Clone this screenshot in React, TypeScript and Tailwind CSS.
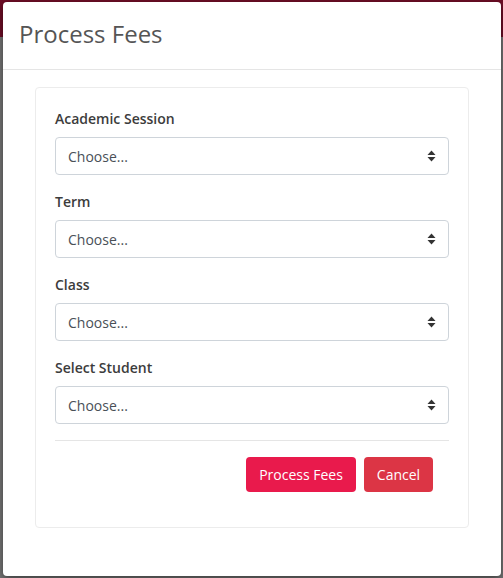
const fields = ['Academic Session', 'Term', 'Class', 'Select Student'];

function SortIcon() {
  return (
    <svg width="9" height="12" viewBox="0 0 9 12" className="text-[#333]">
      <path d="M4.5 0.5 L8.5 5 L0.5 5 Z" fill="currentColor" />
      <path d="M4.5 11.5 L8.5 7 L0.5 7 Z" fill="currentColor" />
    </svg>
  );
}

function FakeSelect() {
  return (
    <div className="flex h-[38px] items-center justify-between rounded border border-[#ced4da] bg-white pl-3 pr-[12px] text-[14px] text-[#495057]">
      <span>Choose...</span>
      <SortIcon />
    </div>
  );
}

export default function App() {
  return (
    <div
      className="relative h-[578px] w-[503px] overflow-hidden bg-[#767676]"
      style={{ fontFamily: '"Open Sans", "Liberation Sans", sans-serif' }}
    >
      {/* dimmed page behind the modal */}
      <div className="absolute left-0 right-0 top-0 h-[37px] bg-[#6e0d26]" />

      <div className="relative ml-[3px] mt-[2px] h-[574px] w-[498px] rounded bg-white shadow-[0_3px_9px_rgba(0,0,0,0.5)]">
        <div className="flex h-[68px] items-center border-b border-[#e5e5e5] pl-[16px]">
          <div className="-mt-[3px] text-[24px] leading-none text-[#555]">Process Fees</div>
        </div>

        <div className="px-8 pt-[17px]">
          <div className="rounded border border-[#ececec] px-[19px] pb-[35px] pt-5">
            {fields.map((label) => (
              <div key={label} className="mb-4">
                <div className="mb-2 text-[14px] font-semibold leading-[21px] text-[#3c3c3c]">{label}</div>
                <FakeSelect />
              </div>
            ))}

            <div className="h-px bg-[#e5e5e5]" />

            <div className="flex justify-end gap-2 pr-4 pt-4">
              <button className="h-[35px] w-[110px] rounded bg-[#e91a4c] text-[14px] text-white">
                Process Fees
              </button>
              <button className="h-[35px] w-[69px] rounded bg-[#dc3545] text-[14px] text-white">
                Cancel
              </button>
            </div>
          </div>
        </div>
      </div>
    </div>
  );
}
